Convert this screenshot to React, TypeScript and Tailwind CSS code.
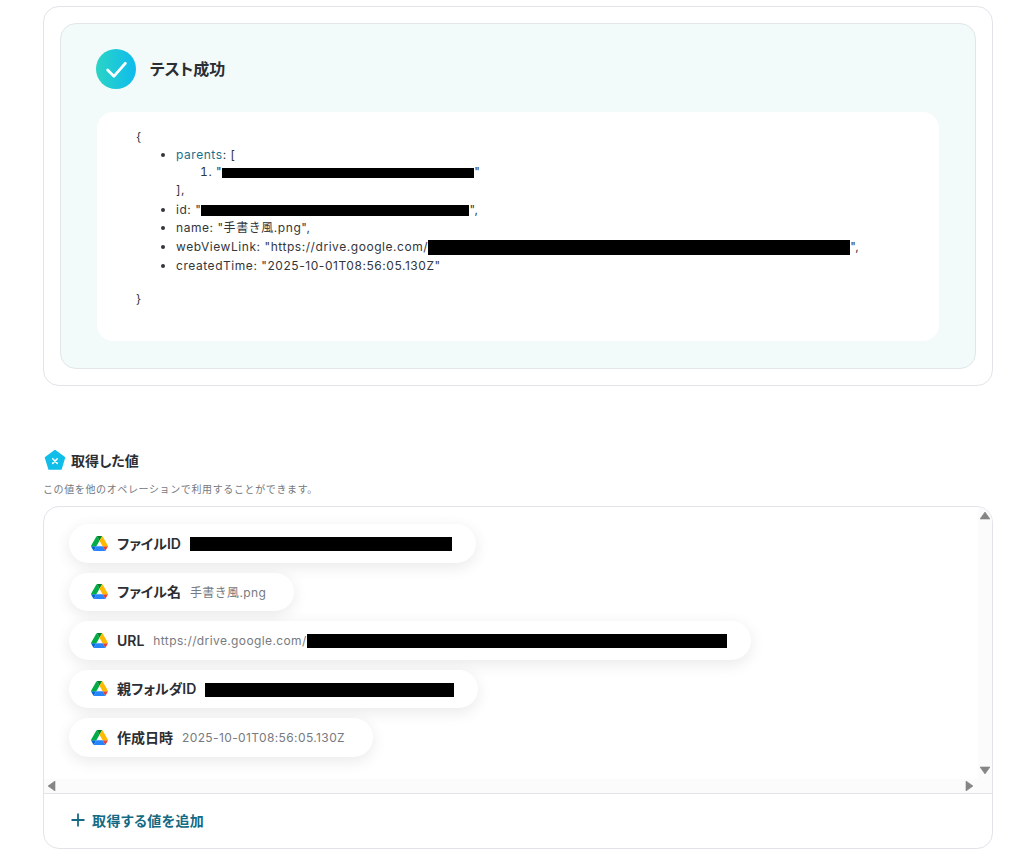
const fontStack = { fontFamily: 'Inter, "Noto Sans CJK JP", sans-serif' };

const outputs = [
  { label: 'ファイルID', value: '', redact: 262 },
  { label: 'ファイル名', value: '手書き風.png', redact: 0 },
  { label: 'URL', value: 'https://drive.google.com/', redact: 420 },
  { label: '親フォルダID', value: '', redact: 249 },
  { label: '作成日時', value: '2025-10-01T08:56:05.130Z', redact: 0 },
];

function DriveIcon() {
  return (
    <svg viewBox="0 0 87.3 78" className="w-[17px] h-[15px] shrink-0">
      <path d="m6.6 66.85 3.85 6.65c.8 1.4 1.95 2.5 3.3 3.3l13.75-23.8h-27.5c0 1.55.4 3.1 1.2 4.5z" fill="#0066da" />
      <path d="m43.65 25-13.75-23.8c-1.35.8-2.5 1.9-3.3 3.3l-25.4 44a9.06 9.06 0 0 0 -1.2 4.5h27.5z" fill="#00ac47" />
      <path d="m73.55 76.8c1.35-.8 2.5-1.9 3.3-3.3l1.6-2.75 7.65-13.25c.8-1.4 1.2-2.95 1.2-4.5h-27.502l5.852 11.5z" fill="#ea4335" />
      <path d="m43.65 25 13.75-23.8c-1.35-.8-2.9-1.2-4.5-1.2h-18.5c-1.6 0-3.15.45-4.5 1.2z" fill="#00832d" />
      <path d="m59.8 53h-32.3l-13.75 23.8c1.35.8 2.9 1.2 4.5 1.2h50.8c1.6 0 3.15-.45 4.5-1.2z" fill="#2684fc" />
      <path d="m73.4 26.5-12.7-22c-.8-1.4-1.95-2.5-3.3-3.3l-13.75 23.8 16.15 28h27.45c0-1.55-.4-3.1-1.2-4.5z" fill="#ffba00" />
    </svg>
  );
}

function Redact({ width, height }: { width: number; height: number }) {
  return <span className="inline-block bg-black align-middle" style={{ width, height }} />;
}

function Triangle({ dir }: { dir: 'up' | 'down' | 'left' | 'right' }) {
  const points = {
    up: '5,1 10,8 0,8',
    down: '0,1 10,1 5,8',
    left: '8,0 8,10 1,5',
    right: '1,0 8,5 1,10',
  }[dir];
  return (
    <svg viewBox="0 0 10 10" className="w-[10px] h-[10px]">
      <polygon points={points} fill="#858585" stroke="#858585" strokeWidth="0.6" strokeLinejoin="round" />
    </svg>
  );
}

function TestResult() {
  return (
    <div className="border border-[#e2e4ea] rounded-2xl p-4 bg-white">
      <div className="h-[346px] border border-[#e2e6e8] rounded-2xl bg-[#f2fafa] pl-[35px] pr-9 pt-[25px]">
        <div className="flex items-center gap-[14px] h-10">
          <div className="w-10 h-10 rounded-full bg-gradient-to-l from-[#0fbbed] to-[#2bd4c4] flex items-center justify-center">
            <svg viewBox="0 0 24 24" className="w-[25px] h-[25px]" fill="none" stroke="white" strokeWidth="2.6" strokeLinecap="round" strokeLinejoin="round">
              <path d="M3.5 12.5l6 6 11-12.5" />
            </svg>
          </div>
          <span className="text-[16px] font-semibold text-[#2b2e33] [font-feature-settings:'palt']">テスト成功</span>
        </div>
        <div className="mt-[23px] ml-px h-[229px] bg-white rounded-2xl pl-[39px] pt-4 text-[12px] leading-[18px] tracking-[0.046em] text-[#33363b]">
          <div>{'{'}</div>
          <ul className="list-disc pl-10">
            <li>
              <span className="text-[#1c6f8a]">parents</span>: [
              <ol className="list-decimal pl-[40px] -mt-px">
                <li>
                  "<Redact width={252} height={10} />"
                </li>
              </ol>
              ],
            </li>
            <li className="mt-[2px]">
              id: "<Redact width={268} height={11} />",
            </li>
            <li>name: "手書き風.png",</li>
            <li className="leading-[20px]">
              webViewLink: "https://drive.google.com/
              <Redact width={422} height={15} />",
            </li>
            <li>createdTime: "2025-10-01T08:56:05.130Z"</li>
          </ul>
          <div className="mt-[15px]">{'}'}</div>
        </div>
      </div>
    </div>
  );
}

function OutputChip({ label, value, redact }: { label: string; value: string; redact: number }) {
  return (
    <div className="h-[38.5px] self-start flex items-center rounded-full bg-white shadow-[0_4px_16px_rgba(0,0,0,0.09)] pl-[22px] pr-6">
      <DriveIcon />
      <span className="ml-[9px] text-[14px] font-semibold text-[#2b2e33] [font-feature-settings:'palt']">{label}</span>
      <span className="ml-[9px] mt-[2px] text-[12px] tracking-[0.032em] text-[#777a80] flex items-center">
        {value}
        {redact > 0 ? <Redact width={redact} height={14} /> : <span className="w-1" />}
      </span>
    </div>
  );
}

function OutputList() {
  return (
    <div>
      <div className="flex items-center gap-[5px] ml-px h-6 -mt-px">
        <svg viewBox="0 0 22 22" className="w-[22px] h-[22px]">
          <polygon points="11,1.5 20.5,8.5 17,20 5,20 1.5,8.5" fill="#10bee8" stroke="#10bee8" strokeWidth="1.5" strokeLinejoin="round" />
          <path d="M8.7 9.8l4.6 4.6M13.3 9.8l-4.6 4.6" stroke="white" strokeWidth="1.5" strokeLinecap="round" />
        </svg>
        <span className="text-[14px] font-semibold text-[#2b2e33] [font-feature-settings:'palt']">取得した値</span>
      </div>
      <p className="mt-[10px] text-[10px] leading-[14px] tracking-[0.062em] text-[#75787e]">この値を他のオペレーションで利用することができます。</p>
      <div className="mt-[10px] border border-[#e2e4ea] rounded-2xl bg-white overflow-hidden">
        <div className="relative h-[287px] border-b border-[#e2e4ea]">
          <div className="h-[272px] pl-[25px] pt-[17px] flex flex-col gap-[10px] overflow-hidden">
            {outputs.map((o) => (
              <OutputChip key={o.label} {...o} />
            ))}
          </div>
          <div className="absolute top-0 right-0 bottom-[14px] w-[14px] bg-[#fbfbfb] flex flex-col justify-between items-center pt-1 pb-[3px]">
            <Triangle dir="up" />
            <Triangle dir="down" />
          </div>
          <div className="absolute left-0 right-0 bottom-0 h-[14px] bg-[#fbfbfb] flex justify-between items-center pl-[3px] pr-[17px]">
            <Triangle dir="left" />
            <Triangle dir="right" />
          </div>
        </div>
        <div className="h-[54px] flex items-center pl-[26px] pb-[2px] gap-[6px] text-[#146a83]">
          <svg viewBox="0 0 16 16" className="w-[16px] h-[16px]" stroke="currentColor" strokeWidth="1.8" fill="none">
            <path d="M8 1.5v13M1.5 8h13" />
          </svg>
          <span className="text-[14px] font-semibold tracking-[0.03em] [font-feature-settings:'palt']">取得する値を追加</span>
        </div>
      </div>
    </div>
  );
}

export default function App() {
  return (
    <div style={fontStack} className="bg-white pl-[43px] pr-[38px] pt-[6px] pb-[6px]">
      <TestResult />
      <div className="mt-[63px]">
        <OutputList />
      </div>
    </div>
  );
}
